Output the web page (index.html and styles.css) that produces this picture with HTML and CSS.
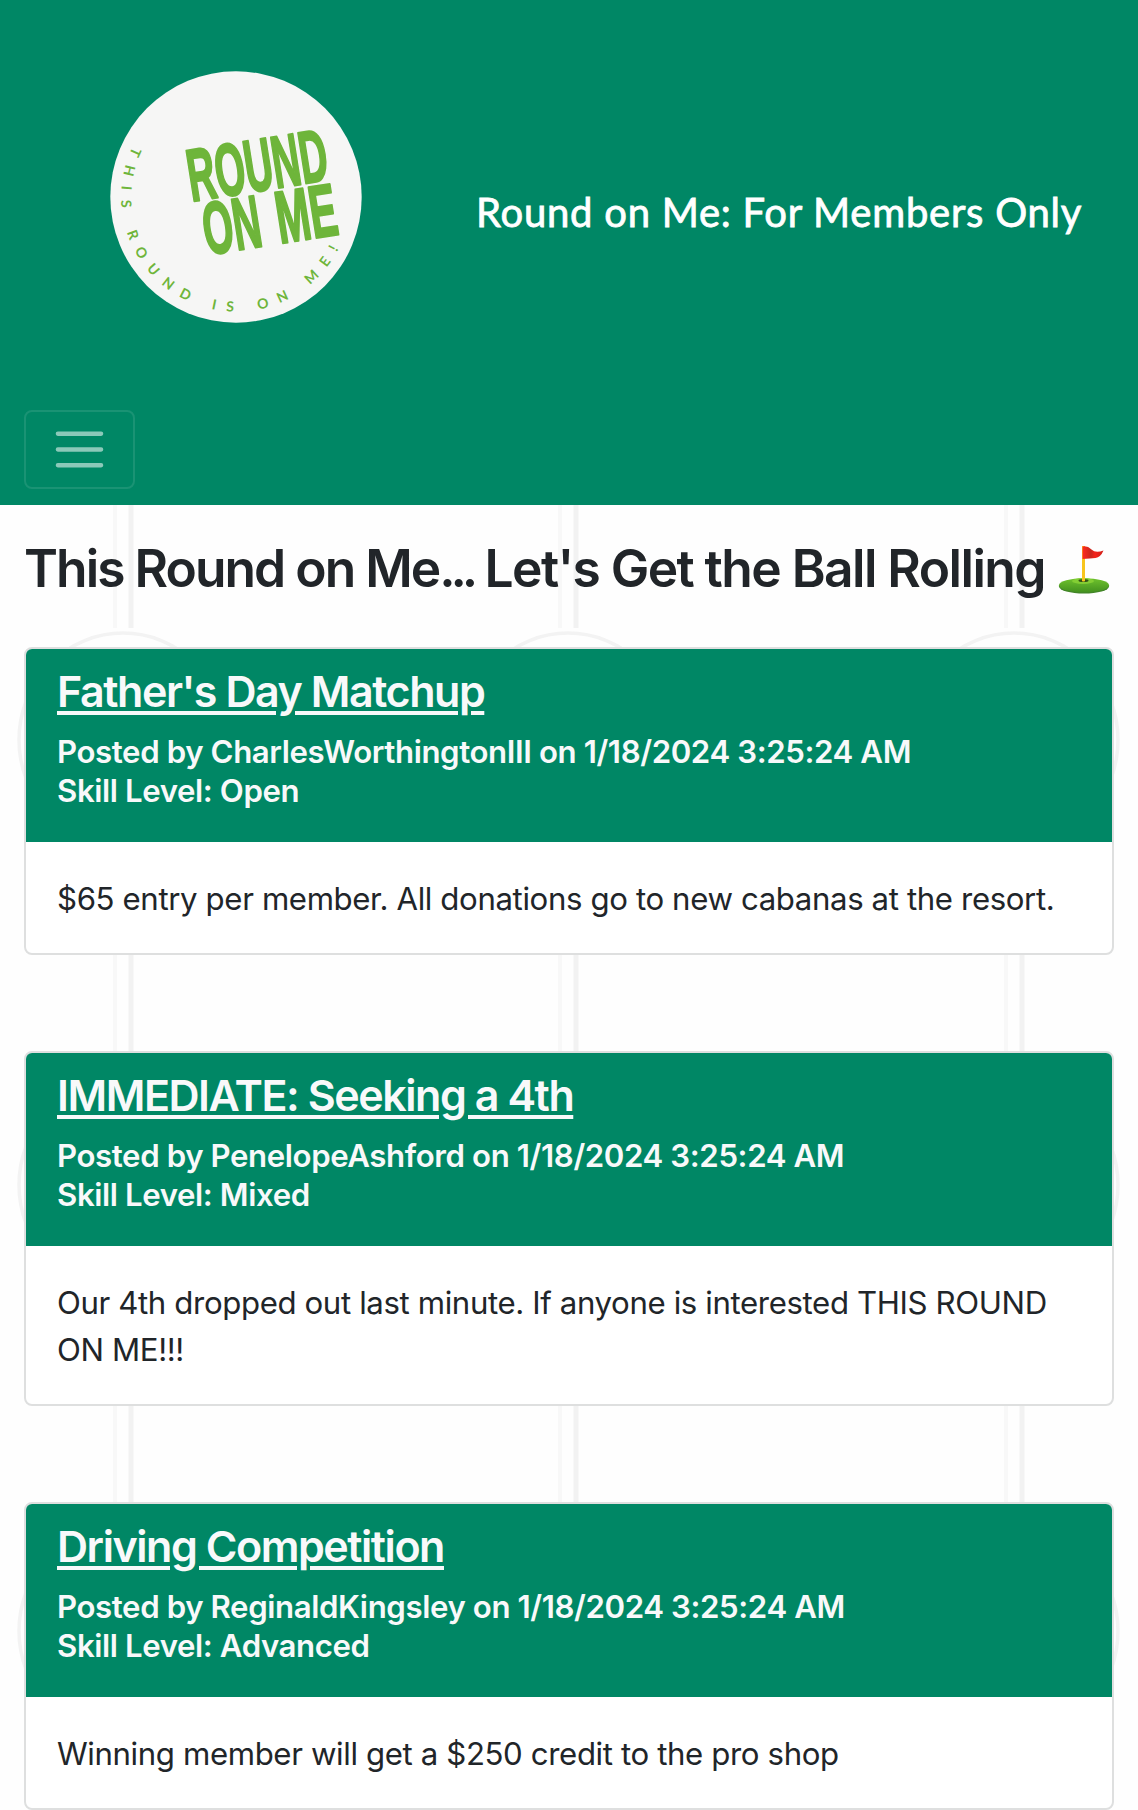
FILE: index.html
```html
<!DOCTYPE html>
<html lang="en">
<head>
<meta charset="utf-8">
<title>Round on Me</title>
<link rel="stylesheet" href="styles.css">
</head>
<body>
<header class="site-header">
  <div class="brand">
    <svg class="logo" viewBox="0 0 252 252" role="img" aria-label="Round on Me">
      <circle cx="126" cy="126" r="125.7" fill="#f6f6f5"/>
      <path id="ring" d="M22.600 75.600 A115 115 0 1 0 239.300 146" fill="none"/>
      <text class="ring-text"><textPath href="#ring" textLength="359">THIS ROUND IS ON ME!</textPath></text>
      <g class="logo-words">
        <text transform="translate(81.500 130.500) rotate(-9)" textLength="141" lengthAdjust="spacingAndGlyphs">ROUND</text>
        <text transform="translate(97 184) rotate(-9)" textLength="58" lengthAdjust="spacingAndGlyphs">ON</text>
        <text transform="translate(170 172.500) rotate(-9)" textLength="61" lengthAdjust="spacingAndGlyphs">ME</text>
      </g>
    </svg>
    <span class="brand-name">Round on Me: For Members Only</span>
  </div>
  <button class="menu-toggle" aria-label="Menu">
    <svg class="menu-icon" viewBox="0 0 30 30"><path d="M4 7h22M4 15h22M4 23h22"/></svg>
  </button>
</header>
<main class="feed">
  <h1 class="feed-title"><span><span class="lead">This Round on Me</span><span class="dots">...</span> Let's Get the Ball Rolling</span>
    <svg class="flag" viewBox="0 0 52 50" role="img" aria-label="Golf flag">
      <defs>
        <linearGradient id="grass" x1="0" y1="0" x2="0" y2="1"><stop offset="0" stop-color="#6fc22d"/><stop offset="1" stop-color="#43911f"/></linearGradient>
        <linearGradient id="cloth"><stop offset="0" stop-color="#ff2a20"/><stop offset=".4" stop-color="#c9261c"/><stop offset=".6" stop-color="#f5221a"/><stop offset="1" stop-color="#cf2018"/></linearGradient>
      </defs>
      <ellipse cx="26" cy="41.500" rx="25" ry="7" fill="#438529"/>
      <ellipse cx="26" cy="40.300" rx="25" ry="7" fill="url(#grass)"/>
      <ellipse cx="25" cy="36" rx="11" ry="3" fill="#83ce34"/>
      <ellipse cx="25.500" cy="35.500" rx="5" ry="1.500" fill="#345316"/>
      <path d="M24 1h3v35q-1.500 1-3 0z" fill="#f8c51d"/>
      <path d="M24.500 1.500q5-1 9 3t12 1q-3 7-8 7.500t-13 1z" fill="url(#cloth)"/>
    </svg>
  </h1>
  <article class="card">
    <div class="card-head">
      <h2 class="card-title"><a class="card-link">Father's Day Matchup</a></h2>
      <p class="card-meta">Posted by CharlesWorthingtonIII on 1/18/2024 3:25:24 AM<br>Skill Level: Open</p>
    </div>
    <p class="card-body">$65 entry per member. All donations go to new cabanas at the resort.</p>
  </article>
  <article class="card">
    <div class="card-head">
      <h2 class="card-title"><a class="card-link">IMMEDIATE: Seeking a 4th</a></h2>
      <p class="card-meta">Posted by PenelopeAshford on 1/18/2024 3:25:24 AM<br>Skill Level: Mixed</p>
    </div>
    <p class="card-body">Our 4th dropped out last minute. If anyone is interested THIS ROUND ON ME!!!</p>
  </article>
  <article class="card">
    <div class="card-head">
      <h2 class="card-title"><a class="card-link">Driving Competition</a></h2>
      <p class="card-meta">Posted by ReginaldKingsley on 1/18/2024 3:25:24 AM<br>Skill Level: Advanced</p>
    </div>
    <p class="card-body">Winning member will get a $250 credit to the pro shop</p>
  </article>
</main>
</body>
</html>
```
FILE: styles.css
```css
* { box-sizing: border-box; }

body {
  margin: 0;
  color: #212529;
  font-family: Inter, "Liberation Sans", sans-serif;
  background: #fefefe url("data:image/svg+xml,%3Csvg xmlns='http://www.w3.org/2000/svg' viewBox='0 0 446 446'%3E%3Cg fill='none'%3E%3Cpath d='M215 0V228' stroke='%23f8f8f8' stroke-width='4'/%3E%3Cpath d='M231 0V228' stroke='%23f2f2f2' stroke-width='5'/%3E%3Cellipse cx='223' cy='340' rx='104' ry='107' stroke='%23f3f3f3' stroke-width='3.500'/%3E%3C/g%3E%3C/svg%3E") -100px 400px / 445.5px 445.5px;
}

.site-header {
  height: 505px;
  padding: 71px 24px 0;
  background: #008765;
}

.brand {
  display: flex;
  align-items: flex-start;
  height: 339px;
  padding-left: 86px;
}

.logo {
  flex: none;
  width: 252px;
  height: 252px;
}

.ring-text {
  font: 700 14px Lato, sans-serif;
  fill: #6eb53a;
}

.logo-words {
  font: 700 74px "Liberation Sans", sans-serif;
  fill: #6eb53a;
  stroke: #6eb53a;
  stroke-width: 2.4;
  stroke-linejoin: round;
}

.brand-name {
  margin: 117px 0 0 114px;
  color: #fff;
  font: 400 40px/48px Lato, sans-serif;
  letter-spacing: .75px;
  white-space: nowrap;
  -webkit-text-stroke: .8px #fff;
}

.menu-toggle {
  display: flex;
  align-items: center;
  justify-content: center;
  width: 111px;
  height: 79px;
  padding: 0;
  background: none;
  border: 2px solid rgba(255, 255, 255, .1);
  border-radius: 8px;
}

.menu-icon {
  width: 59px;
  height: 59px;
  fill: none;
  stroke: rgba(255, 255, 255, .55);
  stroke-width: 2.2;
  stroke-linecap: round;
}

.feed { padding: 32px 24px 0; }

.feed-title {
  display: flex;
  justify-content: space-between;
  align-items: flex-start;
  height: 110px;
  margin: 0;
  padding-right: 4px;
  font-size: 51.5px;
  font-weight: 600;
  line-height: 63px;
  letter-spacing: -1.55px;
  white-space: nowrap;
}

.lead { letter-spacing: -1.95px; }

.dots { letter-spacing: -5.2px; }

.flag {
  flex: none;
  width: 52px;
  height: 50px;
  margin-top: 7.5px;
}

.card {
  margin-bottom: 96px;
  overflow: hidden;
  background: #fff;
  border: 2px solid #dedfdf;
  border-radius: 8px;
}

.card:last-child { margin-bottom: 0; }

.card-head {
  height: 193px;
  padding: 16px 31px 0;
  color: #f8f9fa;
  background: #008765;
}

.card-title {
  margin: 0 0 15px;
  font-size: 43px;
  font-weight: 600;
  line-height: 53px;
  letter-spacing: -1.45px;
}

.card-link {
  text-decoration: underline;
  text-decoration-thickness: 4px;
  text-underline-offset: 4px;
}

.card-meta {
  margin: 0;
  font-size: 31.2px;
  font-weight: 600;
  line-height: 39px;
  letter-spacing: -.4px;
}

.card-body {
  margin: 0;
  padding: 33.5px 31px 30.5px;
  font-size: 31.2px;
  line-height: 47px;
  letter-spacing: -.38px;
}
```
